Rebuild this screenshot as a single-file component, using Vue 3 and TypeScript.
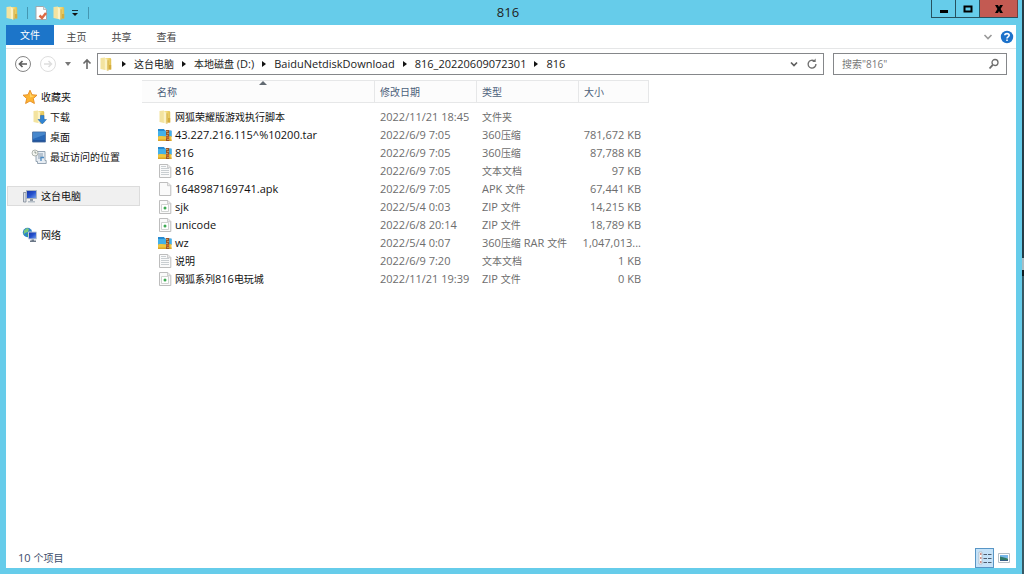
<script setup lang="ts">
import { ref } from 'vue'

type FileKind = 'folder' | 'archive' | 'text' | 'blank' | 'zip'

interface FileRow {
  name: string
  date: string
  type: string
  size: string
  kind: FileKind
}

interface Run {
  text: string
  cjk: boolean
}

const files: FileRow[] = [
  { name: '网狐荣耀版游戏执行脚本', date: '2022/11/21 18:45', type: '文件夹', size: '', kind: 'folder' },
  { name: '43.227.216.115^%10200.tar', date: '2022/6/9 7:05', type: '360压缩', size: '781,672 KB', kind: 'archive' },
  { name: '816', date: '2022/6/9 7:05', type: '360压缩', size: '87,788 KB', kind: 'archive' },
  { name: '816', date: '2022/6/9 7:05', type: '文本文档', size: '97 KB', kind: 'text' },
  { name: '1648987169741.apk', date: '2022/6/9 7:05', type: 'APK 文件', size: '67,441 KB', kind: 'blank' },
  { name: 'sjk', date: '2022/5/4 0:03', type: 'ZIP 文件', size: '14,215 KB', kind: 'zip' },
  { name: 'unicode', date: '2022/6/8 20:14', type: 'ZIP 文件', size: '18,789 KB', kind: 'zip' },
  { name: 'wz', date: '2022/5/4 0:07', type: '360压缩 RAR 文件', size: '1,047,013...', kind: 'archive' },
  { name: '说明', date: '2022/6/9 7:20', type: '文本文档', size: '1 KB', kind: 'text' },
  { name: '网狐系列816电玩城', date: '2022/11/21 19:39', type: 'ZIP 文件', size: '0 KB', kind: 'zip' },
]

const crumbs = ['这台电脑', '本地磁盘 (D:)', 'BaiduNetdiskDownload', '816_20220609072301', '816']
const tabs = ['主页', '共享', '查看']
const query = ref('')

// Splits a label so that Latin and Chinese parts can have their own text size.
function runs(text: string): Run[] {
  return (text.match(/[\u4e00-\u9fff]+|[^\u4e00-\u9fff]+/g) ?? []).map((part) => ({
    text: part,
    cjk: /[\u4e00-\u9fff]/.test(part),
  }))
}
</script>

<template>
  <div class="desktop">
    <svg class="defs" width="0" height="0" aria-hidden="true">
      <defs>
        <linearGradient id="gold" x1="0" x2="1" y1="0" y2="0">
          <stop offset="0" stop-color="#f8eaa9" />
          <stop offset="0.5" stop-color="#f0d878" />
          <stop offset="1" stop-color="#e0bf50" />
        </linearGradient>
        <linearGradient id="screen" x1="0" x2="1" y1="0" y2="1">
          <stop offset="0" stop-color="#1634a4" />
          <stop offset="0.5" stop-color="#2450cd" />
          <stop offset="1" stop-color="#7ba8ee" />
        </linearGradient>
        <symbol id="folder" viewBox="0 0 16 16">
          <path d="M2.500 2 7 1.500V14l-4.500-1Z" fill="#f3e3a0" />
          <path d="M6.500 2H12.500l.7 1v10.500H6.500Z" fill="url(#gold)" />
          <path d="M7 2.200 9.500 4v11L7 13.800Z" fill="#fbf2c6" />
          <path d="M9.500 4v11l1-.5V4.500Z" fill="#d2ac45" />
          <path d="M11 9h2.200v4.500H11Z" fill="#d5ad3e" />
        </symbol>
        <symbol id="archive" viewBox="0 0 16 16">
          <path d="M1 2h6l1 1.500h6.500V10H1Z" fill="#2689cf" />
          <path d="M1 4h13.500v5.500H1Z" fill="#42b0e8" />
          <path d="M1 9.500C5 8 9 10 14.500 9v5H1Z" fill="#f0c63f" />
          <path d="M1 12.500h13.500V14H1Z" fill="#dba52b" />
          <path d="M9 3h3.200v11H9Z" fill="#985528" />
          <path d="M9.500 4h1v1h-1zm1 2h1v1h-1zm-1 2h1v1h-1zm1 4h1v1h-1z" fill="#eed38f" />
          <path d="M9.300 9.500h2.600v2H9.300Z" fill="#d46b27" />
        </symbol>
        <symbol id="page" viewBox="0 0 16 16">
          <path d="M2.500 1.500h8.300l3 3v10H2.500Z" fill="#fafafa" stroke="#bdbdbd" />
          <path d="M10.500 1.500v3.200h3.200" fill="#e8e8e8" stroke="#bdbdbd" stroke-width=".7" />
        </symbol>
      </defs>
    </svg>

    <div class="window">
      <header class="titlebar">
        <div class="quick">
          <svg class="ic" viewBox="0 0 16 16"><use href="#folder" /></svg>
          <span class="sep"></span>
          <button class="plain" aria-label="属性">
            <svg class="ic" viewBox="0 0 16 16">
              <path d="M3 1.500h7.500l3 3v10H3Z" fill="#fff" stroke="#9fa9ae" />
              <path d="M10.500 1.500v3h3" fill="#e2e6e8" stroke="#9fa9ae" stroke-width=".7" />
              <path d="m6.500 10.500 2.500 2.500 4-5" fill="none" stroke="#dd6a43" stroke-width="2.500" />
            </svg>
          </button>
          <button class="plain" aria-label="新建文件夹">
            <svg class="ic" viewBox="0 0 16 16"><use href="#folder" /></svg>
          </button>
          <button class="plain menu" aria-label="自定义快速访问工具栏">
            <svg width="8" height="8" viewBox="0 0 8 8"><path d="M1 1.500h6" stroke="#18343e" /><path d="M1 4h6L4 7Z" fill="#111" /></svg>
          </button>
          <span class="sep"></span>
        </div>
        <h1>816</h1>
        <div class="controls">
          <button aria-label="最小化">
            <svg width="12" height="12" viewBox="0 0 12 12"><path d="M2 7h8v3H2Z" /></svg>
          </button>
          <button aria-label="最大化">
            <svg width="12" height="12" viewBox="0 0 12 12"><path d="M2.500 3.500h7v5h-7Z" fill="none" stroke="#000" stroke-width="2" /></svg>
          </button>
          <button class="close" aria-label="关闭">
            <svg width="12" height="12" viewBox="0 0 12 12"><path d="M2 2h3l1 2 1-2h3L7.600 6 10 10H7L6 8l-1 2H2l2.400-4Z" /></svg>
          </button>
        </div>
      </header>

      <div class="client">
        <nav class="ribbon">
          <button class="file">文件</button>
          <button v-for="tab in tabs" :key="tab" class="tab">{{ tab }}</button>
          <span class="grow"></span>
          <button class="plain" aria-label="展开功能区">
            <svg width="10" height="8" viewBox="0 0 10 8"><path d="m1.500 2 3.500 3.500L8.500 2" fill="none" stroke="#9a9a9a" stroke-width="1.600" /></svg>
          </button>
          <button class="plain help" aria-label="帮助">
            <svg width="14" height="14" viewBox="0 0 14 14">
              <circle cx="7" cy="7" r="6.200" fill="#1d72ca" />
              <path d="M4.800 5.300C4.800 3 9.200 3 9.200 5.300 9.200 6.800 7 6.800 7 8.400" fill="none" stroke="#fff" stroke-width="1.600" />
              <path d="M6.200 9.600h1.600v1.500H6.200Z" fill="#fff" />
            </svg>
          </button>
        </nav>

        <div class="navrow">
          <button class="plain" aria-label="后退">
            <svg width="18" height="18" viewBox="0 0 18 18" fill="none" stroke="#858585"><circle cx="9" cy="9" r="7.500" /><path d="M13 9H5.500M8.500 6 5.500 9l3 3" stroke="#5c5c5c" stroke-width="1.700" /></svg>
          </button>
          <button class="plain forward" aria-label="前进">
            <svg width="18" height="18" viewBox="0 0 18 18" fill="none" stroke="#dedede"><circle cx="9" cy="9" r="7.500" /><path d="M5 9h7.500M9.500 6l3 3-3 3" stroke-width="1.500" /></svg>
          </button>
          <button class="plain recent" aria-label="最近浏览的位置">
            <svg width="8" height="6" viewBox="0 0 8 6"><path d="M1 1h6L4 5Z" fill="#777" /></svg>
          </button>
          <button class="plain up" aria-label="向上">
            <svg width="12" height="12" viewBox="0 0 12 12"><path d="M6 11V2M2.500 5.500 6 2l3.500 3.500" fill="none" stroke="#696969" stroke-width="1.600" /></svg>
          </button>
          <div class="address">
            <svg class="ic" viewBox="0 0 16 16"><use href="#folder" /></svg>
            <template v-for="crumb in crumbs" :key="crumb">
              <svg class="arrow" width="6" height="8" viewBox="0 0 6 8"><path d="M1 1v6l4-3Z" fill="#111" /></svg>
              <a href="#"><span v-for="(r, i) in runs(crumb)" :key="i" :class="{ cjk: r.cjk }">{{ r.text }}</span></a>
            </template>
            <span class="grow"></span>
            <button class="plain" aria-label="以前的位置">
              <svg width="8" height="8" viewBox="0 0 8 8"><path d="m1 2.500 3 3 3-3" fill="none" stroke="#5e5e5e" stroke-width="1.700" /></svg>
            </button>
            <button class="plain refresh" aria-label="刷新">
              <svg width="12" height="12" viewBox="0 0 12 12"><path d="M8.500 3.200A3.900 3.900 0 1 0 9.900 6" fill="none" stroke="#707070" stroke-width="1.400" /><path d="M6.200 3.900h3.500V.6Z" fill="#707070" /></svg>
            </button>
          </div>
          <div class="search">
            <input v-model="query" type="text" aria-label="搜索" placeholder="搜索&quot;816&quot;" />
            <svg width="12" height="12" viewBox="0 0 12 12" fill="none" stroke="#6c6c6c"><circle cx="7" cy="4.500" r="3" stroke-width="1.300" /><path d="M4.800 6.800 1.500 10.500" stroke-width="1.800" /></svg>
          </div>
        </div>

        <div class="body">
          <aside>
            <ul>
              <li>
                <a href="#">
                  <svg class="ic" viewBox="0 0 16 16"><path d="m8 1.200 2 4.500 5 .5-3.700 3.300 1.100 5L8 12l-4.400 2.500 1.100-5L1 6.200l5-.5Z" fill="#fdb532" stroke="#e48b22" stroke-width=".9" /><path d="m8 3 1.300 3.500 3.500.4L8 8.500Z" fill="#ffd66c" /></svg>
                  收藏夹
                </a>
                <ul>
                  <li>
                    <a href="#">
                      <svg class="ic" viewBox="0 0 16 16"><use href="#folder" /><path d="M9.500 6.500h3.500v4h2.500L11.300 15 7 10.500h2.500Z" fill="#3184d3" stroke="#1763b0" stroke-width=".5" /></svg>
                      下载
                    </a>
                  </li>
                  <li>
                    <a href="#">
                      <svg class="ic" viewBox="0 0 16 16"><path d="M1.500 3h13v10h-13Z" fill="#2969b8" stroke="#5b7ca9" /><path d="M2 3.500h12v2L2 10Z" fill="#4787cc" /><path d="M2 11.500h12v1H2Z" fill="#1a4385" /></svg>
                      桌面
                    </a>
                  </li>
                  <li>
                    <a href="#">
                      <svg class="ic" viewBox="0 0 16 16"><path d="M5 2.500h9v9h1.200v3H6.500v-2H5Z" fill="#e7edf3" stroke="#8d9dac" stroke-width=".9" /><path d="M7 5h5M7 7h5M7 9h3" stroke="#899caf" /><path d="M10 12v-3.500h3" fill="none" stroke="#4c89bf" stroke-width="1.300" /><circle cx="4" cy="4" r="3" fill="#f3f4ef" stroke="#9da39e" stroke-width=".8" /><path d="M4 2.300V4h1.500" fill="none" stroke="#66726c" stroke-width=".7" /></svg>
                      最近访问的位置
                    </a>
                  </li>
                </ul>
              </li>
              <li class="root">
                <a href="#" class="active">
                  <svg class="ic" viewBox="0 0 16 16"><path d="M1.500 4.500h2.500V14H1.500Z" fill="#d9dee4" stroke="#7e8995" stroke-width=".8" /><path d="M4.500 2.500h10v8h-10Z" fill="url(#screen)" stroke="#a9b4c1" /><path d="M8 11h3v2H8Z" fill="#919ba6" /><path d="M6 13h7v1.500H6Z" fill="#b5bec7" /></svg>
                  这台电脑
                </a>
              </li>
              <li class="root">
                <a href="#">
                  <svg class="ic" viewBox="0 0 16 16"><circle cx="5.500" cy="5.500" r="4.700" fill="#2d83cc" /><path d="M2 3.500 5 1l2 1-1 3-3 1-1.500 2Z" fill="#7bc97b" /><path d="m4 7 3 .5-1 2.500Z" fill="#3fa85e" /><path d="M6.500 5h8v7h-8Z" fill="url(#screen)" stroke="#c1cbd7" /><path d="M9.500 12.500h2.500v1H14V15H8v-1.500h1.500Z" fill="#6b7787" /></svg>
                  网络
                </a>
              </li>
            </ul>
          </aside>

          <main>
            <table>
              <colgroup>
                <col class="c-name" />
                <col class="c-date" />
                <col class="c-type" />
                <col class="c-size" />
              </colgroup>
              <thead>
                <tr>
                  <th class="sorted" aria-sort="ascending">
                    名称
                    <svg class="sort" width="8" height="4" viewBox="0 0 8 4"><path d="M0 4h8L4 0Z" fill="#626a72" /></svg>
                  </th>
                  <th>修改日期</th>
                  <th>类型</th>
                  <th>大小</th>
                </tr>
              </thead>
              <tbody>
                <tr v-for="(f, n) in files" :key="n">
                  <td class="name">
                    <div class="cell">
                      <svg class="ic" viewBox="0 0 16 16">
                        <use v-if="f.kind === 'folder'" href="#folder" />
                        <use v-else-if="f.kind === 'archive'" href="#archive" />
                        <use v-else href="#page" />
                        <path v-if="f.kind === 'text'" d="M4 5.500h8M4 7.500h8M4 9.500h8M4 11.500h8M4 3.500h5" stroke="#c9ced1" />
                        <template v-if="f.kind === 'zip'">
                          <path d="M4.500 5.500h7v7h-7Z" fill="#fff" stroke="#d0d3d1" />
                          <circle cx="8" cy="9" r="1.500" fill="#3daa52" />
                        </template>
                      </svg>
                      <div><span v-for="(r, i) in runs(f.name)" :key="i" :class="{ cjk: r.cjk }">{{ r.text }}</span></div>
                    </div>
                  </td>
                  <td>{{ f.date }}</td>
                  <td><span v-for="(r, i) in runs(f.type)" :key="i" :class="{ cjk: r.cjk }">{{ r.text }}</span></td>
                  <td class="size">{{ f.size }}</td>
                </tr>
              </tbody>
            </table>
          </main>
        </div>

        <footer>
          <div class="count"><span>10 </span><span class="cjk">个项目</span></div>
          <div class="views">
            <button class="view on" aria-label="详细信息">
              <svg width="14" height="14" viewBox="0 0 14 14"><path d="M1 1h3v12H1Z" fill="#fff" stroke="#aab2bb" stroke-width=".7" /><path d="M2 3h1.500M2 7h1.500M2 11h1.500" stroke="#be6c61" stroke-width="1.300" /><path d="M5.500 3.500H9M10 3.500h3.500M5.500 7.500H9M10 7.500h3.500M5.500 11.500H9M10 11.500h3.500" stroke="#4e5e70" /></svg>
            </button>
            <button class="view" aria-label="大缩略图">
              <svg width="14" height="14" viewBox="0 0 14 14"><path d="M1.500 2.500h11v9h-11Z" fill="#fff" stroke="#b4bec6" /><path d="M3 4h8v3H3Z" fill="#78b8ea" /><path d="M3 5.500 7 6.500l4 1V10H3Z" fill="#327b69" /><path d="M3 9h8v1H3Z" fill="#355d84" /></svg>
            </button>
          </div>
        </footer>
      </div>
    </div>
    <div class="edge"></div>
  </div>
</template>

<style>
body {
  margin: 0;
}
</style>

<style scoped>
.desktop {
  display: flex;
  height: 100vh;
  font: 11px/18px "Open Sans", "Noto Sans CJK SC", sans-serif;
  color: #222;
  background: #66ccea;
  overflow: hidden;
}
.desktop * {
  box-sizing: border-box;
}
.defs {
  position: absolute;
}
.window {
  flex: 1;
  min-width: 0;
  display: flex;
  flex-direction: column;
}
.edge {
  width: 2px;
  background: linear-gradient(#243d47 45%, #a9bcc3 45%, #a9bcc3 47%, #101c20 47%, #101c20 48%, #375964 48%);
}
.ic {
  width: 16px;
  height: 16px;
  flex: none;
}
.cjk {
  font-size: 10px;
}
.grow {
  flex: 1;
}
a {
  color: inherit;
  text-decoration: none;
}
button {
  font: inherit;
  color: inherit;
  border: 0;
  padding: 0;
  background: none;
}
.plain {
  display: flex;
  align-items: center;
  justify-content: center;
}
.titlebar {
  height: 25px;
  flex: none;
  display: grid;
  grid-template-columns: 1fr auto 1fr;
  padding: 0 4px;
}
.quick {
  display: flex;
  align-items: center;
  gap: 2px;
}
.quick .sep {
  width: 1px;
  height: 12px;
  margin: 0 3px 0 5px;
  background: #4597b2;
}
.quick .menu {
  width: 12px;
}
h1 {
  margin: 0 6px 0 0;
  font-size: 13px;
  line-height: 25px;
  font-weight: 400;
}
.controls {
  display: flex;
  justify-self: end;
  height: 18px;
}
.controls button {
  width: 24px;
  display: flex;
  align-items: center;
  justify-content: center;
  border: 1px solid #26515f;
  border-top: 0;
  border-right: 0;
}
.controls .close {
  width: 39px;
  background: #c35a52;
  border-right: 1px solid #70403f;
}
.client {
  flex: 1;
  min-height: 0;
  display: flex;
  flex-direction: column;
  margin: 0 6px 6px;
  background: #fff;
}
.ribbon {
  display: flex;
  align-items: center;
  height: 24px;
  padding-right: 2px;
  border-bottom: 1px solid #e5e6e7;
  font-size: 10px;
}
.ribbon .file {
  align-self: flex-start;
  width: 48px;
  height: 20px;
  color: #fff;
  background: #1c75c9;
}
.ribbon .tab {
  width: 45px;
  color: #444;
}
.ribbon .help {
  margin-left: 7px;
}
.navrow {
  display: flex;
  align-items: center;
  height: 30px;
  padding: 0 9px 0 8px;
}
.forward {
  margin-left: 7px;
}
.recent {
  margin-left: 7px;
}
.up {
  margin: 0 4px 0 9px;
}
.address {
  flex: 1;
  min-width: 0;
  display: flex;
  align-items: center;
  height: 22px;
  border: 1px solid #85878a;
  padding: 0 5px 0 0;
  white-space: nowrap;
}
.address .arrow {
  margin: 0 7px;
}
.refresh {
  margin-left: 8px;
}
.search {
  width: 174px;
  flex: none;
  display: flex;
  align-items: center;
  height: 22px;
  margin-left: 9px;
  padding: 0 6px 0 8px;
  border: 1px solid #85878a;
}
.search input {
  flex: 1;
  min-width: 0;
  border: 0;
  padding: 0;
  outline: 0;
  background: none;
  font: 10px/18px "Open Sans", "Noto Sans CJK SC", sans-serif;
}
.search input::placeholder {
  color: #777;
  opacity: 1;
}
.body {
  flex: 1;
  min-height: 0;
  display: flex;
}
aside {
  width: 134px;
  flex: none;
  padding-top: 8px;
  font-size: 10px;
}
ul {
  margin: 0;
  padding: 0;
  list-style: none;
}
aside a {
  display: flex;
  align-items: center;
  gap: 3px;
  height: 20px;
  margin-left: 1px;
  padding-left: 14px;
  border: 1px solid transparent;
  color: #111;
}
aside ul ul a {
  padding-left: 23px;
}
.root {
  margin-top: 19px;
}
aside .active {
  background: #f0f0f0;
  border-color: #dcdcdc;
}
main {
  flex: 1;
  min-width: 0;
  padding: 1px 0 0 2px;
}
table {
  table-layout: fixed;
  width: 507px;
  border-collapse: separate;
  border-spacing: 0;
}
.c-name {
  width: 233px;
}
.c-date,
.c-type {
  width: 102px;
}
.c-size {
  width: 70px;
}
th {
  height: 23px;
  padding: 0 0 0 5px;
  font-size: 10px;
  font-weight: 400;
  text-align: left;
  color: #4c607a;
  background: #fcfcfc;
  border: solid #e6e7e8;
  border-width: 1px 1px 1px 0;
}
.sorted {
  position: relative;
  padding-left: 15px;
}
.sort {
  position: absolute;
  top: 0;
  left: 117px;
}
tbody::before {
  content: "";
  display: block;
  height: 5px;
}
td {
  height: 18px;
  padding: 0 0 0 5px;
  color: #6d6d6d;
  white-space: nowrap;
  line-height: 18px;
}
.name {
  color: #111;
  padding-left: 15px;
}
.cell {
  display: flex;
  align-items: center;
  gap: 2px;
  height: 18px;
}
.size {
  padding: 0 8px 0 0;
  text-align: right;
}
footer {
  flex: none;
  display: flex;
  align-items: center;
  justify-content: space-between;
  height: 20px;
  padding: 0 3px 0 12px;
  color: #3c4d6b;
}
.views {
  display: flex;
}
.view {
  width: 19px;
  height: 20px;
  display: flex;
  align-items: center;
  justify-content: center;
}
.view.on {
  background: #c5e2f8;
  border: 1px solid #5896c6;
}
</style>
